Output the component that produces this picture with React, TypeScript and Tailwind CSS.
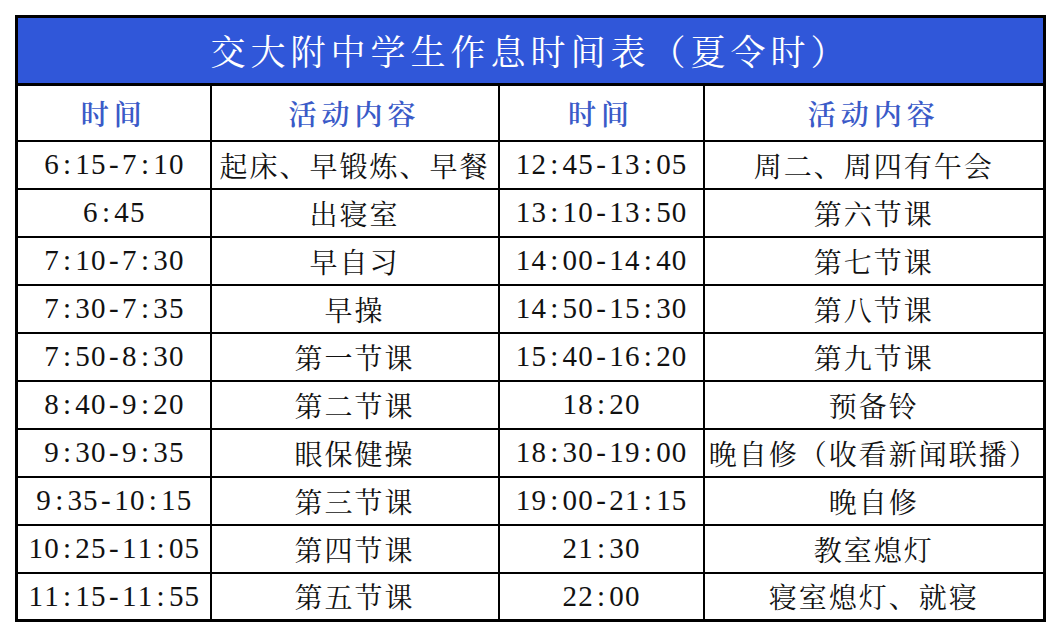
import React from 'react';

const rows: [string, string, string, string][] = [
  ['6:15-7:10', '起床、早锻炼、早餐', '12:45-13:05', '周二、周四有午会'],
  ['6:45', '出寝室', '13:10-13:50', '第六节课'],
  ['7:10-7:30', '早自习', '14:00-14:40', '第七节课'],
  ['7:30-7:35', '早操', '14:50-15:30', '第八节课'],
  ['7:50-8:30', '第一节课', '15:40-16:20', '第九节课'],
  ['8:40-9:20', '第二节课', '18:20', '预备铃'],
  ['9:30-9:35', '眼保健操', '18:30-19:00', '晚自修（收看新闻联播）'],
  ['9:35-10:15', '第三节课', '19:00-21:15', '晚自修'],
  ['10:25-11:05', '第四节课', '21:30', '教室熄灯'],
  ['11:15-11:55', '第五节课', '22:00', '寝室熄灯、就寝'],
];

const cjk = "font-['Noto_Serif_CJK_SC','Noto_Sans_CJK_SC',serif]";

// SimSun-style half-width digits: each char gets a fixed box
function TimeCell({ v }: { v: string }) {
  return <td className="border-2 border-black text-center text-[29px] text-[#111] font-['Liberation_Serif',serif] whitespace-nowrap">
      {v.split('').map((c, i) => <span key={i} className="inline-block w-[15.6px] text-center">{c}</span>)}
    </td>;
}

function TextCell({ v }: { v: string }) {
  return <td className={`border-2 border-black text-center text-[28px] tracking-[2px] whitespace-nowrap text-[#111] ${cjk}`}>
      {v}
    </td>;
}

function HeadCell({ v }: { v: string }) {
  return <th className={`border-2 border-black text-center text-[28px] font-semibold tracking-[5px] text-[#3a5ac8] ${cjk}`}>
      {v}
    </th>;
}

export default function App() {
  return <div className="w-[1058px] h-[636px] bg-white pt-[15px] pl-[15px]">
      <table className="w-[1028px] border-collapse table-fixed border-[3px] border-black">
        <colgroup>
          <col className="w-[194px]" />
          <col className="w-[288px]" />
          <col className="w-[205px]" />
          <col className="w-[341px]" />
        </colgroup>
        <thead>
          <tr className="h-[68px]">
            <th colSpan={4} className={`border-[3px] border-black bg-[#3057d9] text-white text-center text-[35px] font-normal tracking-[5px] ${cjk}`}>
              交大附中学生作息时间表（夏令时）
            </th>
          </tr>
          <tr className="h-[56px]">
            <HeadCell v="时间" />
            <HeadCell v="活动内容" />
            <HeadCell v="时间" />
            <HeadCell v="活动内容" />
          </tr>
        </thead>
        <tbody>
          {rows.map((r, i) => <tr key={i} className="h-[48px]">
              <TimeCell v={r[0]} />
              <TextCell v={r[1]} />
              <TimeCell v={r[2]} />
              <TextCell v={r[3]} />
            </tr>)}
        </tbody>
      </table>
    </div>;
}
